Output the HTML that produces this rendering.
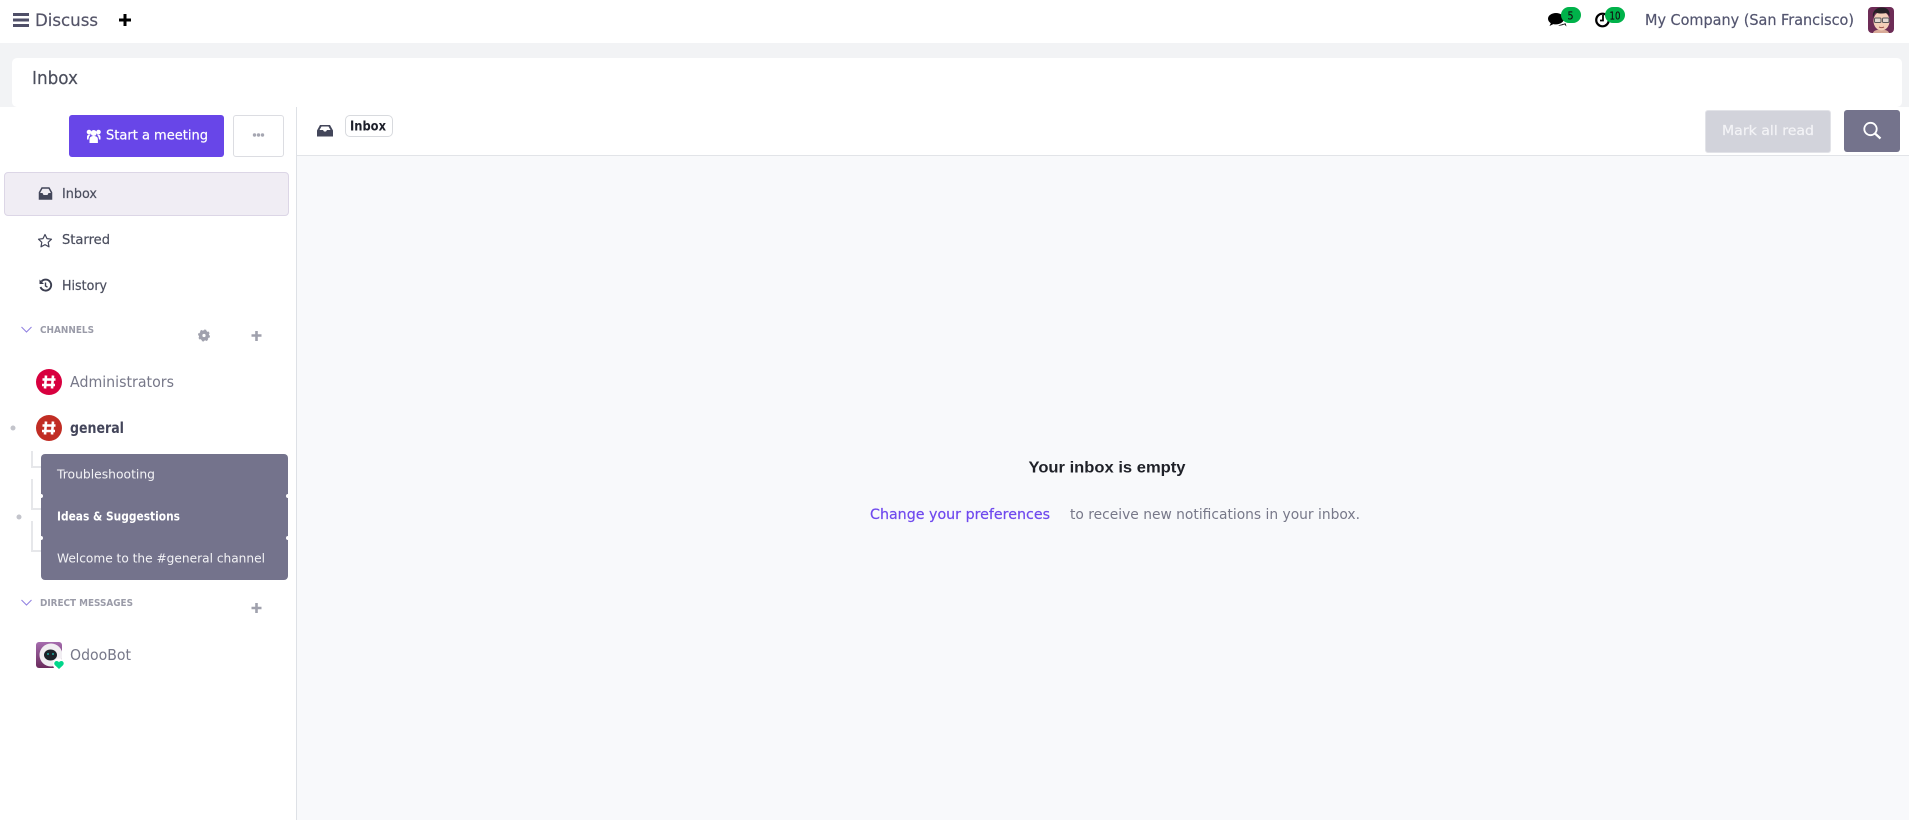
<!DOCTYPE html>
<html lang="en">
<head>
<meta charset="utf-8">
<title>Discuss - Inbox</title>
<style>
html,body{margin:0;padding:0;width:1909px;height:820px;overflow:hidden;background:#f2f3f5;font-family:"DejaVu Sans","Liberation Sans",sans-serif}
.b{position:absolute;box-sizing:border-box}
svg{position:absolute;left:0;top:0}
text{font-family:"DejaVu Sans","Liberation Sans",sans-serif;stroke-width:.2px}
text[fill="#4b4e5e"]{stroke:#4b4e5e}
text[fill="#545468"]{stroke:#545468}
text[fill="#53556f"]{stroke:#53556f}
text[fill="#4b4e5c"]{stroke:#4b4e5c}
text[fill="#111"]{stroke:#111}
</style>
</head>
<body>
<div class="b" style="left:0;top:0;width:1909px;height:43px;background:#fff"></div>
<div class="b" style="left:12px;top:58px;width:1890px;height:49px;background:#fff;border-radius:5px"></div>
<div class="b" style="left:0;top:107px;width:297px;height:713px;background:#fff;border-right:1px solid #dee1e6"></div>
<div class="b" style="left:297px;top:107px;width:1612px;height:713px;background:#f8f9fb"></div>
<div class="b" style="left:297px;top:107px;width:1612px;height:49px;background:#fff;border-bottom:1px solid #e2e4e8"></div>
<div class="b" style="left:69px;top:115px;width:155px;height:42px;background:#6846e8;border-radius:3px"></div>
<div class="b" style="left:233px;top:115px;width:51px;height:42px;background:#fff;border:1px solid #dcdde2;border-radius:3px"></div>
<div class="b" style="left:4px;top:172px;width:285px;height:44px;background:#f0edf4;border:1px solid #dcd6e6;border-radius:4px"></div>
<div class="b" style="left:41px;top:454px;width:247px;height:126px;background:#74738c;border-radius:4px"></div>
<div class="b" style="left:31px;top:451px;width:10px;height:17px;border-left:2px solid #e6e7ea;border-bottom:2px solid #e6e7ea"></div>
<div class="b" style="left:31px;top:479px;width:10px;height:31px;border-left:2px solid #e6e7ea;border-bottom:2px solid #e6e7ea"></div>
<div class="b" style="left:31px;top:521px;width:10px;height:31px;border-left:2px solid #e6e7ea;border-bottom:2px solid #e6e7ea"></div>
<div class="b" style="left:1705px;top:110px;width:126px;height:43px;background:#d2d3db;border:1px solid #e2e3e8;border-radius:3px"></div>
<div class="b" style="left:1844px;top:110px;width:56px;height:42px;background:#74738c;border-radius:3px"></div>
<div class="b" style="left:345px;top:115px;width:48px;height:22px;background:#fff;border:1px solid #d8dade;border-radius:5px"></div>

<svg width="1909" height="820" viewBox="0 0 1909 820">
  <!-- notches -->
  <circle cx="41" cy="496" r="2" fill="#fff"/><circle cx="288" cy="496" r="2" fill="#fff"/>
  <circle cx="41" cy="538" r="2" fill="#fff"/><circle cx="288" cy="538" r="2" fill="#fff"/>

  <!-- top bar -->
  <path d="M13 14.500h16M13 20h16M13 25.500h16" stroke="#4f4f68" stroke-width="3" fill="none"/>
  <text x="35" y="26" font-size="17" fill="#545468" textLength="63" lengthAdjust="spacingAndGlyphs">Discuss</text>
  <path d="M125 14v12M119 20h12" stroke="#000" stroke-width="3" fill="none"/>

  <!-- messages icon -->
  <path d="M1556 13c-4.500 0-8 2.600-8 5.800 0 1.800 1.100 3.300 2.800 4.400l-1.300 2.800 3.800-1.900c.9.200 1.800.3 2.700.3 4.500 0 8-2.600 8-5.600s-3.500-5.800-8-5.800z" fill="#000"/>
  <path d="M1558 25.500c2.500.3 5-.3 6.200-1.300l2.300 2.300-1-3.200" fill="#000"/>
  <rect x="1561" y="7" width="20" height="16" rx="8" fill="#00b24a"/>
  <text x="1567.500" y="19.500" font-size="11" fill="#111" textLength="6" lengthAdjust="spacingAndGlyphs">5</text>
  <!-- activity icon -->
  <circle cx="1602.500" cy="20" r="6.300" fill="none" stroke="#000" stroke-width="2.200"/>
  <path d="M1603 15v5.500h-3" fill="none" stroke="#000" stroke-width="1.800"/>
  <rect x="1605" y="7" width="20" height="16" rx="8" fill="#00b24a"/>
  <text x="1609.500" y="19.500" font-size="11" fill="#111" textLength="11" lengthAdjust="spacingAndGlyphs">10</text>

  <text x="1645" y="25" font-size="15" fill="#53556f" textLength="209" lengthAdjust="spacingAndGlyphs">My Company (San Francisco)</text>

  <!-- user avatar -->
  <rect x="1868" y="7" width="26" height="26" rx="4" fill="#6d2c56"/>
  <path d="M1873 33c.5-2 3-3.500 8-3.500s7.500 1.500 8 3.500z" fill="#d8aa98"/>
  <ellipse cx="1881.500" cy="21" rx="8" ry="9.500" fill="#f3cfb8"/>
  <path d="M1873 18c-1-6 2-10 8-10.500 5-.3 8.500 2 8.500 6v3c-1-2-2-3-3-3.500-4 1-9 .5-11-.5-1 1-1.800 3-2.500 5.500z" fill="#262126"/>
  <rect x="1874.500" y="18" width="6.500" height="4.500" rx="1" fill="#dcdcdc" fill-opacity=".7" stroke="#5a5a5a" stroke-width="1"/>
  <rect x="1882.500" y="18" width="6.500" height="4.500" rx="1" fill="#dcdcdc" fill-opacity=".7" stroke="#5a5a5a" stroke-width="1"/>
  <path d="M1879 27c1.500.8 3.500.8 5 0" stroke="#a0574e" stroke-width="1" fill="none"/>

  <!-- page title -->
  <text x="32" y="84" font-size="18" fill="#4b4e5c" textLength="46" lengthAdjust="spacingAndGlyphs">Inbox</text>

  <!-- start meeting -->
  <g fill="#fff">
    <circle cx="93.700" cy="133" r="3"/>
    <circle cx="89" cy="132" r="2.300"/><circle cx="98.500" cy="132" r="2.300"/>
    <path d="M89.500 143v-3.500c0-2.500 1.600-3.500 4.200-3.500s4.200 1 4.200 3.500v3.500z"/>
    <path d="M87 139.500v-2.500c0-1.500 1-2.500 2.500-2.500h1.500c-1 .6-2.200 1.800-2.500 5z"/>
    <path d="M100.500 139.500v-2.500c0-1.500-1-2.500-2.500-2.500h-1.500c1 .6 2.200 1.800 2.500 5z"/>
  </g>
  <text x="106" y="139.500" font-size="13.500" fill="#fff" stroke="#fff" textLength="102" lengthAdjust="spacingAndGlyphs">Start a meeting</text>
  <g fill="#a6a7b2"><circle cx="254.500" cy="135" r="1.700"/><circle cx="258.500" cy="135" r="1.700"/><circle cx="262.500" cy="135" r="1.700"/></g>

  <!-- nav -->
  <path d="M39.500 192.500l2.500-4.500h7l2.500 4.500v6.500h-12z" fill="none" stroke="#43465a" stroke-width="1.500"/>
  <path d="M39 193h3.500l1 2h4l1-2h3.500v6.500h-12.500z" fill="#43465a"/>
  <text x="62" y="198" font-size="13" fill="#4b4e5e" textLength="35" lengthAdjust="spacingAndGlyphs">Inbox</text>

  <path d="M45 234.500l2 4.100 4.500.6-3.300 3.100.8 4.500-4-2.200-4 2.200.8-4.500-3.300-3.100 4.500-.6z" fill="none" stroke="#43465a" stroke-width="1.200" stroke-linejoin="round"/>
  <text x="62" y="244" font-size="13" fill="#4b4e5e" textLength="48" lengthAdjust="spacingAndGlyphs">Starred</text>

  <path d="M41.500 281.500a5.500 5.500 0 1 1-1 5.500" fill="none" stroke="#3b3e50" stroke-width="1.900"/>
  <path d="M39.500 279.500v4.500h4.500z" fill="#3b3e50"/>
  <path d="M45.500 282.500v3.500l2 1.200" fill="none" stroke="#3b3e50" stroke-width="1.400"/>
  <text x="62" y="290" font-size="13" fill="#4b4e5e" textLength="45" lengthAdjust="spacingAndGlyphs">History</text>

  <!-- channels -->
  <path d="M21.500 327l5 5 5-5" fill="none" stroke="#8f7fe0" stroke-width="1"/>
  <text x="40" y="333" font-size="9.500" font-weight="bold" fill="#9a9ba8" textLength="54" lengthAdjust="spacingAndGlyphs">CHANNELS</text>
  <circle cx="204" cy="335.500" r="3.400" fill="none" stroke="#a0a1ad" stroke-width="3.600"/>
  <circle cx="204" cy="335.500" r="5" fill="none" stroke="#a0a1ad" stroke-width="2" stroke-dasharray="2 1.930"/>
  <path d="M256.500 331v10M251.500 335.500h10" stroke="#a0a1ad" stroke-width="2.600" fill="none"/>

  <circle cx="49" cy="382" r="13" fill="#d8003f"/>
  <path d="M46 375.500l-1 13M53 375.500l-1 13M42.500 379.500h13M42 385h13" stroke="#fff" stroke-width="2.600" fill="none"/>
  <text x="70" y="387" font-size="15" fill="#777889" textLength="104" lengthAdjust="spacingAndGlyphs">Administrators</text>

  <circle cx="13" cy="428" r="2.500" fill="#c3c4cb"/>
  <circle cx="49" cy="428" r="13" fill="#c12d24"/>
  <path d="M46 421.500l-1 13M53 421.500l-1 13M42.500 425.500h13M42 431h13" stroke="#fff" stroke-width="2.600" fill="none"/>
  <text x="70" y="433" font-size="15" font-weight="bold" fill="#43455a" textLength="54" lengthAdjust="spacingAndGlyphs">general</text>

  <text x="57" y="478.500" font-size="12.500" fill="#f3f3f6" textLength="98" lengthAdjust="spacingAndGlyphs">Troubleshooting</text>
  <circle cx="19" cy="517" r="2.500" fill="#c3c4cb"/>
  <text x="57" y="520.500" font-size="12.500" font-weight="bold" fill="#fff" textLength="123" lengthAdjust="spacingAndGlyphs">Ideas &amp; Suggestions</text>
  <text x="57" y="562.500" font-size="12.500" fill="#f3f3f6" textLength="208" lengthAdjust="spacingAndGlyphs">Welcome to the #general channel</text>

  <!-- direct messages -->
  <path d="M21.500 600l5 5 5-5" fill="none" stroke="#8f7fe0" stroke-width="1"/>
  <text x="40" y="606" font-size="9.500" font-weight="bold" fill="#9a9ba8" textLength="93" lengthAdjust="spacingAndGlyphs">DIRECT MESSAGES</text>
  <path d="M256.500 603v10M251.500 608h10" stroke="#a0a1ad" stroke-width="2.600" fill="none"/>

  <!-- OdooBot -->
  <defs>
    <linearGradient id="ob" x1="0" y1="0" x2="0" y2="1"><stop offset="0" stop-color="#a56cae"/><stop offset="1" stop-color="#6a2a5c"/></linearGradient>
    <clipPath id="oc"><rect x="36" y="642" width="26" height="26" rx="3"/></clipPath>
  </defs>
  <rect x="36" y="642" width="26" height="26" rx="3" fill="url(#ob)"/>
  <g clip-path="url(#oc)">
    <circle cx="51" cy="655" r="11.500" fill="#f1eef2"/>
    <ellipse cx="50.500" cy="655" rx="6.500" ry="5.500" fill="#1b2229"/>
    <circle cx="48" cy="654" r="1" fill="#1ca59b"/><circle cx="53" cy="654" r="1" fill="#1ca59b"/>
  </g>
  <circle cx="59" cy="664.500" r="6" fill="#fff"/>
  <path d="M59 669l-4-3.800c-1.600-1.700-.4-4.200 1.700-4.200 1 0 1.800.5 2.300 1.200.5-.7 1.300-1.200 2.300-1.200 2.100 0 3.300 2.500 1.700 4.200z" fill="#00d68a"/>
  <text x="70" y="660" font-size="15" fill="#777889" textLength="61" lengthAdjust="spacingAndGlyphs">OdooBot</text>

  <!-- main header -->
  <path d="M320 125h10l3 5.500v6h-16v-6z" fill="#43465a"/>
  <path d="M321.500 126.500h7l2 3.500h-3.500l-1 1.500h-2l-1-1.500h-3.500z" fill="#fff"/>
  <text x="350" y="130.500" font-size="13" font-weight="bold" fill="#1d1f2a" textLength="36" lengthAdjust="spacingAndGlyphs">Inbox</text>

  <text x="1722" y="135" font-size="13.500" fill="#f3f3f6" stroke="#f3f3f6" textLength="92" lengthAdjust="spacingAndGlyphs">Mark all read</text>
  <circle cx="1870.500" cy="129" r="6.200" fill="none" stroke="#fff" stroke-width="1.800"/>
  <path d="M1875 133.500l5.500 5" stroke="#fff" stroke-width="2.200" fill="none"/>

  <!-- empty state -->
  <text x="1028.500" y="472.500" font-size="16" font-weight="bold" fill="#1f2128" style="font-family:'Liberation Sans',sans-serif" textLength="157" lengthAdjust="spacingAndGlyphs">Your inbox is empty</text>
  <text x="870" y="519" font-size="14" fill="#6f49ee" stroke="#6f49ee" textLength="180" lengthAdjust="spacingAndGlyphs">Change your preferences</text>
  <text x="1070" y="519" font-size="14" fill="#777889" textLength="290" lengthAdjust="spacingAndGlyphs">to receive new notifications in your inbox.</text>
</svg>
</body>
</html>
